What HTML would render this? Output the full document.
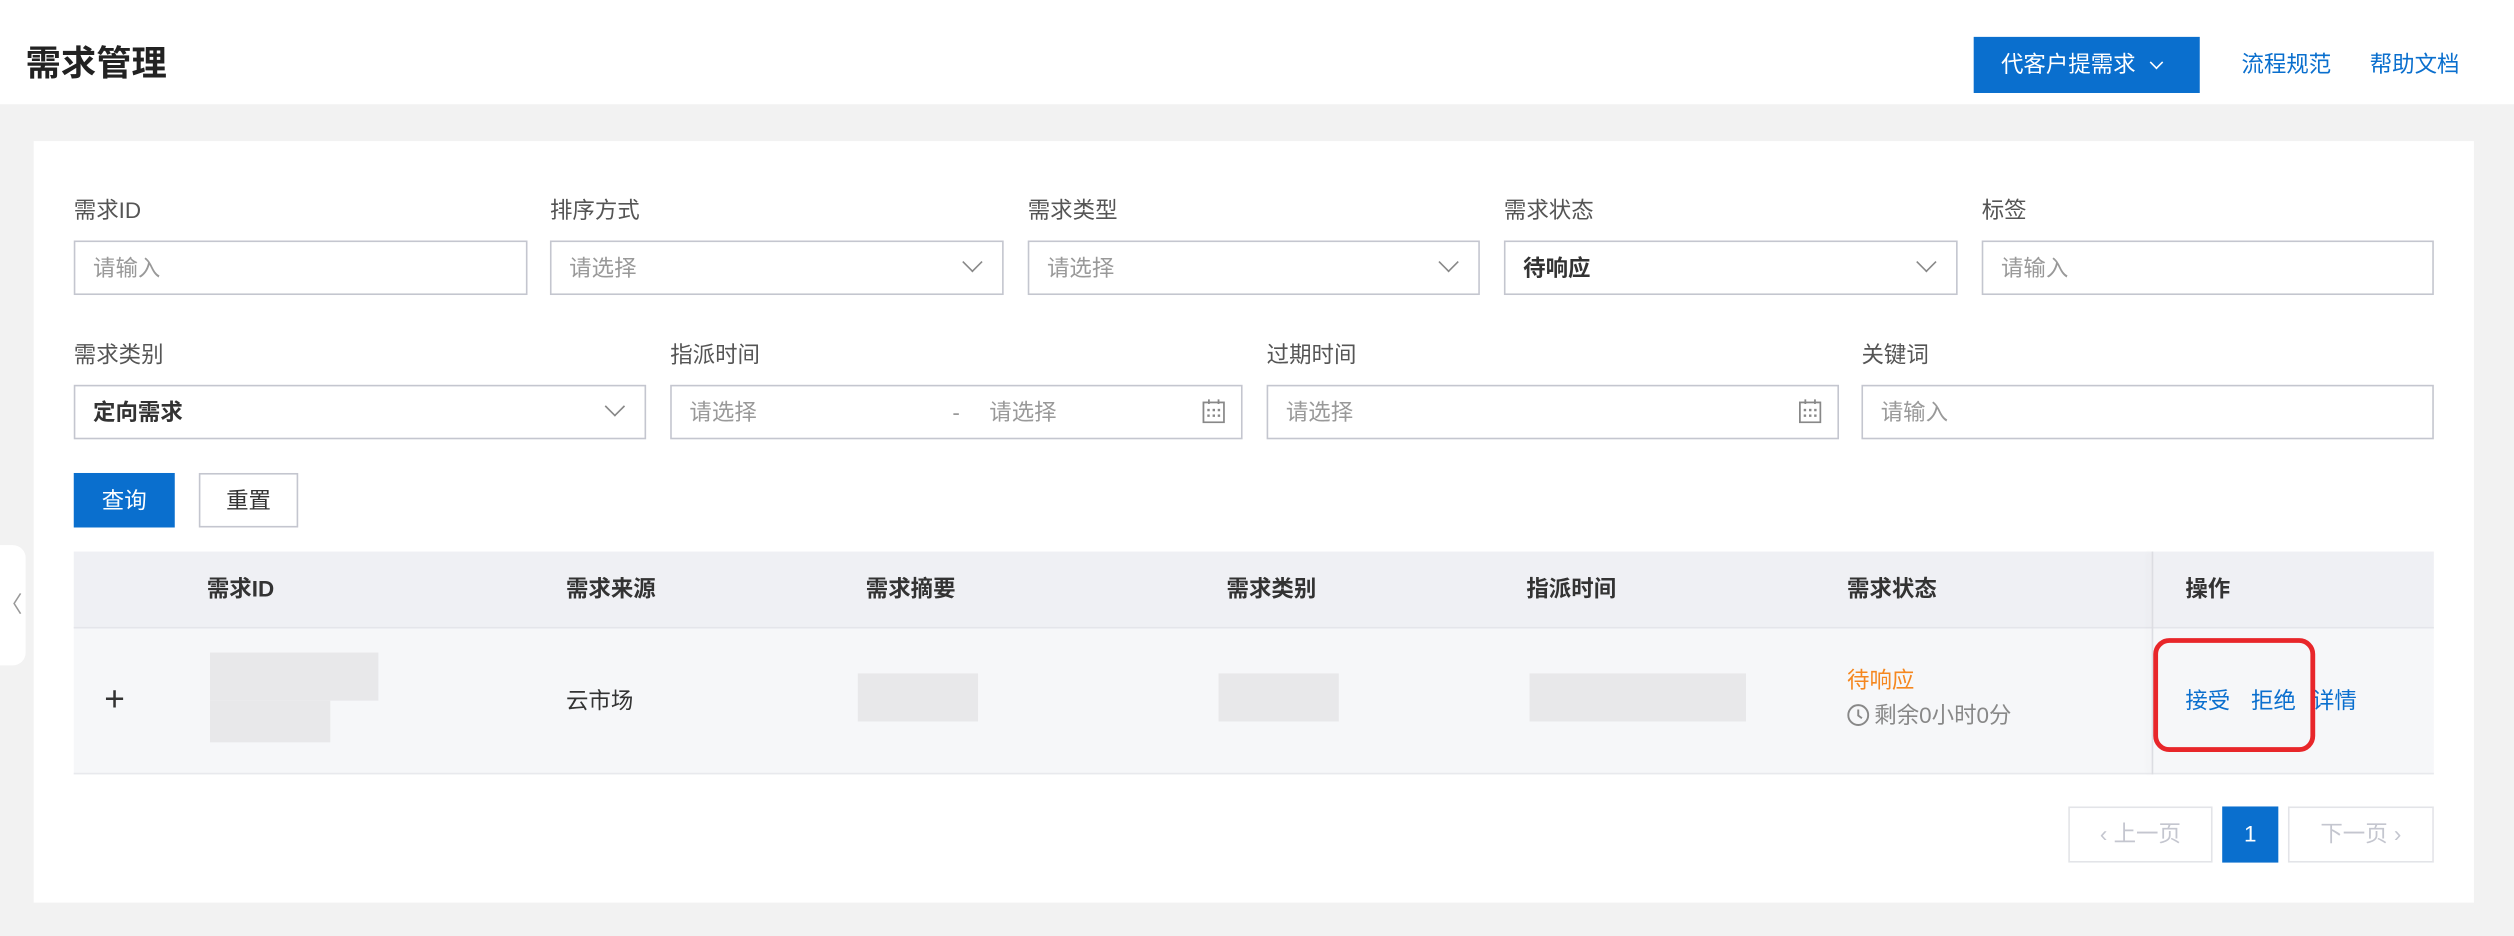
<!DOCTYPE html>
<html><head><meta charset="utf-8"><style>
*{margin:0;padding:0;box-sizing:border-box}
html,body{width:2514px;height:936px;overflow:hidden;background:#f2f2f2}
#w{position:absolute;left:0;top:0;width:1568px;height:584px;transform:scale(1.60332);transform-origin:0 0;font-family:"Liberation Sans","Noto Sans CJK SC",sans-serif;color:#333;font-size:14px}
.a{position:absolute}
.hd{left:0;top:0;width:1568px;height:65px;background:#fff}
.card{left:21px;top:88px;width:1522px;height:475px;background:#fff}
.lb{font-size:14px;color:#555;line-height:20px}
.in{border:1px solid #c4c6cf;height:34px;line-height:32px;padding-left:11px;color:#999;font-size:14px;background:#fff}
.in b{color:#333}
.ch{position:absolute;right:14px;width:9px;height:9px;border-right:1.3px solid #888;border-bottom:1.3px solid #888;transform:rotate(45deg);top:8px}
.blue{color:#0a6fce}
.th{font-weight:bold;color:#333;line-height:20px}
.blk{background:#e8e8ea}
.cal{position:absolute;right:10px;top:8px}
</style></head><body><div id="w">
<div class="a hd"></div>
<div class="a" style="left:16px;top:26px;font-size:22px;font-weight:bold;color:#222;line-height:28px">需求管理</div>
<div class="a" style="left:1231px;top:23px;width:141px;height:35px;background:#0a6fce;color:#fff;line-height:35px;padding-left:17px">代客户提需求 <span style="display:inline-block;width:6px;height:6px;border-right:1.3px solid #fff;border-bottom:1.3px solid #fff;transform:rotate(45deg);margin:0 0 3px 6px"></span></div>
<div class="a blue" style="left:1398px;top:30px;line-height:20px">流程规范</div>
<div class="a blue" style="left:1478px;top:30px;line-height:20px">帮助文档</div>
<div class="a card"></div>
<div class="a" style="left:0;top:340px;width:16px;height:75px;background:#fff;border-radius:0 8px 8px 0;color:#999;line-height:75px;font-size:14px">〈</div>

<div class="a lb" style="left:46px;top:121px">需求ID</div>
<div class="a lb" style="left:343px;top:121px">排序方式</div>
<div class="a lb" style="left:641px;top:121px">需求类型</div>
<div class="a lb" style="left:938px;top:121px">需求状态</div>
<div class="a lb" style="left:1236px;top:121px">标签</div>
<div class="a in" style="left:46px;top:150px;width:283px">请输入</div>
<div class="a in" style="left:343px;top:150px;width:283px">请选择<i class="ch"></i></div>
<div class="a in" style="left:641px;top:150px;width:282px">请选择<i class="ch"></i></div>
<div class="a in" style="left:938px;top:150px;width:283px"><b>待响应</b><i class="ch"></i></div>
<div class="a in" style="left:1236px;top:150px;width:282px">请输入</div>

<div class="a lb" style="left:46px;top:211px">需求类别</div>
<div class="a lb" style="left:418px;top:211px">指派时间</div>
<div class="a lb" style="left:790px;top:211px">过期时间</div>
<div class="a lb" style="left:1161px;top:211px">关键词</div>
<div class="a in" style="left:46px;top:240px;width:357px"><b>定向需求</b><i class="ch"></i></div>
<div class="a in" style="left:418px;top:240px;width:357px">请选择<span style="position:absolute;left:175px">-</span><span style="position:absolute;left:198px">请选择</span><svg class="cal" width="14" height="15" viewBox="0 0 14 15"><rect x="0.6" y="2" width="12.8" height="12.4" fill="none" stroke="#888" stroke-width="1.1"/><path d="M4 0v3M10 0v3" stroke="#888" stroke-width="1.1"/><g fill="#888"><rect x="3" y="6" width="1.5" height="1.5"/><rect x="6.3" y="6" width="1.5" height="1.5"/><rect x="9.5" y="6" width="1.5" height="1.5"/><rect x="3" y="9.5" width="1.5" height="1.5"/><rect x="6.3" y="9.5" width="1.5" height="1.5"/><rect x="9.5" y="9.5" width="1.5" height="1.5"/></g></svg></div>
<div class="a in" style="left:790px;top:240px;width:357px">请选择<svg class="cal" width="14" height="15" viewBox="0 0 14 15"><rect x="0.6" y="2" width="12.8" height="12.4" fill="none" stroke="#888" stroke-width="1.1"/><path d="M4 0v3M10 0v3" stroke="#888" stroke-width="1.1"/><g fill="#888"><rect x="3" y="6" width="1.5" height="1.5"/><rect x="6.3" y="6" width="1.5" height="1.5"/><rect x="9.5" y="6" width="1.5" height="1.5"/><rect x="3" y="9.5" width="1.5" height="1.5"/><rect x="6.3" y="9.5" width="1.5" height="1.5"/><rect x="9.5" y="9.5" width="1.5" height="1.5"/></g></svg></div>
<div class="a in" style="left:1161px;top:240px;width:357px">请输入</div>

<div class="a" style="left:46px;top:295px;width:63px;height:34px;background:#0a6fce;color:#fff;line-height:34px;text-align:center">查询</div>
<div class="a" style="left:124px;top:295px;width:62px;height:34px;border:1px solid #c4c6cf;line-height:32px;text-align:center">重置</div>

<div class="a" style="left:46px;top:344px;width:1472px;height:48px;background:#eff0f4;border-bottom:1px solid #e4e5ea"></div>
<div class="a" style="left:46px;top:392px;width:1472px;height:91px;background:#f6f7f9;border-bottom:1px solid #e8e9ed"></div>
<div class="a" style="left:1342px;top:344px;width:1px;height:139px;background:#dcdde2;box-shadow:-2px 0 4px rgba(0,0,0,.06)"></div>
<div class="a th" style="left:129px;top:357px">需求ID</div>
<div class="a th" style="left:353px;top:357px">需求来源</div>
<div class="a th" style="left:540px;top:357px">需求摘要</div>
<div class="a th" style="left:765px;top:357px">需求类别</div>
<div class="a th" style="left:952px;top:357px">指派时间</div>
<div class="a th" style="left:1152px;top:357px">需求状态</div>
<div class="a th" style="left:1363px;top:357px">操作</div>

<div class="a" style="left:65px;top:422px;font-size:22px;line-height:28px;color:#333">+</div>
<div class="a blk" style="left:131px;top:407px;width:105px;height:30px"></div>
<div class="a blk" style="left:131px;top:437px;width:75px;height:26px"></div>
<div class="a" style="left:353px;top:427px;line-height:20px">云市场</div>
<div class="a blk" style="left:535px;top:420px;width:75px;height:30px"></div>
<div class="a blk" style="left:760px;top:420px;width:75px;height:30px"></div>
<div class="a blk" style="left:954px;top:420px;width:135px;height:30px"></div>
<div class="a" style="left:1152px;top:414px;line-height:20px;color:#f5871f">待响应</div>
<div class="a" style="left:1152px;top:436px;line-height:20px;color:#888"><svg width="14" height="14" viewBox="0 0 14 14" style="vertical-align:-2px;margin-right:3px"><circle cx="7" cy="7" r="6.2" fill="none" stroke="#888" stroke-width="1.2"/><path d="M7 3.5V7.3L9.3 9" fill="none" stroke="#888" stroke-width="1.2"/></svg>剩余0小时0分</div>
<div class="a blue" style="left:1363px;top:427px;line-height:20px">接受</div>
<div class="a blue" style="left:1404px;top:427px;line-height:20px">拒绝</div>
<div class="a blue" style="left:1442px;top:427px;line-height:20px">详情</div>
<div class="a" style="left:1343px;top:398px;width:101px;height:71px;border:3px solid #e8262a;border-radius:10px"></div>

<div class="a" style="left:1290px;top:503px;width:90px;height:35px;border:1px solid #e3e4e8;color:#c4c6cf;line-height:33px;text-align:center">‹ 上一页</div>
<div class="a" style="left:1386px;top:503px;width:35px;height:35px;background:#0a6fce;color:#fff;line-height:35px;text-align:center">1</div>
<div class="a" style="left:1427px;top:503px;width:91px;height:35px;border:1px solid #e3e4e8;color:#c4c6cf;line-height:33px;text-align:center">下一页 ›</div>
</div></body></html>
